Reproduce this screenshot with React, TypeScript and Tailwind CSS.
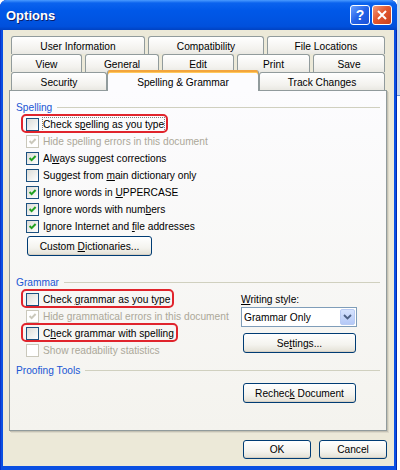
import React from "react";

type BoxProps = { checked?: boolean; disabled?: boolean };

function Box({ checked, disabled }: BoxProps) {
  return (
    <span
      className={
        disabled
          ? "relative flex w-[13px] h-[13px] shrink-0 border border-[#cac8bb] bg-white"
          : "relative flex w-[13px] h-[13px] shrink-0 border border-[#1c5180] bg-[linear-gradient(135deg,#dcdcd7,#ffffff)]"
      }
    >
      {checked && (
        <svg width="11" height="11" viewBox="0 0 11 11" className="absolute left-0 top-0">
          <path
            d="M2.6 5 L4.6 7.1 L8.6 3"
            fill="none"
            stroke={disabled ? "#cac8bb" : "#21a121"}
            strokeWidth="2"
          />
        </svg>
      )}
    </span>
  );
}

type RowProps = {
  children: React.ReactNode;
  checked?: boolean;
  disabled?: boolean;
  red?: boolean;
  focus?: boolean;
};

function Row({ children, checked, disabled, red, focus }: RowProps) {
  return (
    <div className="flex h-[17px] items-center pl-[10px]">
      <div className="relative flex items-center">
        <Box checked={checked} disabled={disabled} />
        <span
          className={
            disabled
              ? "ml-[4px] whitespace-nowrap text-[#aca899]"
              : focus
              ? "ml-[4px] whitespace-nowrap text-black outline-1 outline-dotted outline-[#808080]"
              : "ml-[4px] whitespace-nowrap text-black"
          }
        >
          {children}
        </span>
        {red && (
          <span className="pointer-events-none absolute -left-[5px] -right-[4px] -top-[4px] -bottom-[2px] rounded-[5px] border-2 border-[#e0242c]" />
        )}
      </div>
    </div>
  );
}

function Header({ label, className }: { label: string; className: string }) {
  return (
    <div className={"flex h-[14px] items-center gap-[5px] " + className}>
      <span className="whitespace-nowrap text-[#2056d4]">{label}</span>
      <div className="h-px flex-1 bg-[#d0d0bf]" />
    </div>
  );
}

function XPButton({ children, className }: { children: React.ReactNode; className: string }) {
  return (
    <div
      className={
        "flex items-center justify-center rounded-[3px] border border-[#003c74] bg-[linear-gradient(to_bottom,#ffffff_0%,#f4f3ee_60%,#e3e0d5_100%)] text-black shadow-[inset_0_-1px_0_#d6d0c5] " +
        className
      }
    >
      {children}
    </div>
  );
}

function Tab({ label, w }: { label: string; w: string }) {
  return (
    <div
      className={
        "flex h-[18px] items-center justify-center rounded-t-[3px] border border-b-0 border-[#919b9c] bg-[linear-gradient(to_bottom,#ffffff,#f3f2ee_70%,#e9e8e2)] pt-[1px] text-black " +
        w
      }
    >
      {label}
    </div>
  );
}

export default function App() {
  return (
    <div className="flex h-[470px] w-[400px] overflow-hidden bg-white font-['Liberation_Sans',Arial,sans-serif] text-[10.2px] leading-[13px]">
      <div className="flex h-[470px] w-[397px] shrink-0 flex-col rounded-t-[7px] bg-[#0a4fe2] shadow-[inset_1px_0_0_#0a33c8,inset_-1px_0_0_#002ab0]">
        {/* Title bar */}
        <div className="flex h-[30px] shrink-0 items-center rounded-t-[7px] bg-[linear-gradient(to_bottom,#4a9bff_0%,#0b63ee_10%,#0058e8_35%,#0054e2_65%,#0050dc_88%,#0042c2_100%)] pl-[6px] pr-[5px]">
          <span className="text-[13px] font-bold text-white [text-shadow:1px_1px_0_#0a1e6a]">
            Options
          </span>
          <div className="ml-auto flex gap-[2px]">
            <div className="flex h-[20px] w-[20px] items-center justify-center rounded-[3px] border border-white bg-[linear-gradient(135deg,#6aa0ff,#2463e8_50%,#1a4fd8)] text-[14px] font-bold text-white">
              ?
            </div>
            <div className="flex h-[20px] w-[20px] items-center justify-center rounded-[3px] border border-white bg-[linear-gradient(135deg,#f29a7c,#e3582f_45%,#c8401c)]">
              <svg width="12" height="12" viewBox="0 0 12 12">
                <path d="M2 2 L10 10 M10 2 L2 10" stroke="#ffffff" strokeWidth="2" />
              </svg>
            </div>
          </div>
        </div>

        {/* Body */}
        <div className="mx-[3px] mb-[4px] flex flex-1 flex-col bg-[#ece9d8]">
          {/* Tabs */}
          <div className="ml-[8px] mt-[6px] flex w-[374px] flex-col">
            <div className="flex gap-[3px]">
              <Tab label="User Information" w="w-[134px]" />
              <Tab label="Compatibility" w="w-[116px]" />
              <Tab label="File Locations" w="w-[118px]" />
            </div>
            <div className="flex gap-[3px]">
              <Tab label="View" w="w-[71px]" />
              <Tab label="General" w="w-[74px]" />
              <Tab label="Edit" w="w-[72px]" />
              <Tab label="Print" w="w-[73px]" />
              <Tab label="Save" w="w-[72px]" />
            </div>
            <div className="flex h-[18px]">
              <Tab label="Security" w="w-[96px]" />
              <div className="relative z-10 -mt-[2px] flex h-[21px] w-[152px] items-start justify-center rounded-t-[3px] border-x border-[#919b9c] bg-[#fcfcfe] pt-[6px] shadow-[inset_0_2px_0_#f3a53c,inset_0_3px_0_#ffc85a]">
                Spelling &amp; Grammar
              </div>
              <Tab label="Track Changes" w="w-[126px]" />
            </div>
          </div>

          {/* Panel */}
          <div className="ml-[6px] flex h-[341px] w-[378px] flex-col border border-[#919b9c] bg-[linear-gradient(to_bottom,#fcfcfe,#f4f3ee)] px-[6px] pt-[9px] shadow-[1px_1px_0_#c4c1b3,2px_2px_0_#dcd9ca]">
            <Header label="Spelling" className="" />
            <div className="mt-[2px] flex flex-col">
              <Row red focus>
                Check s<u>p</u>elling as you type
              </Row>
              <Row checked disabled>
                Hide spelling errors in this document
              </Row>
              <Row checked>
                Al<u>w</u>ays suggest corrections
              </Row>
              <Row>
                Suggest from <u>m</u>ain dictionary only
              </Row>
              <Row checked>
                Ignore words in <u>U</u>PPERCASE
              </Row>
              <Row checked>
                Ignore words with num<u>b</u>ers
              </Row>
              <Row checked>
                Ignore Internet and <u>f</u>ile addresses
              </Row>
            </div>
            <XPButton className="ml-[11px] mt-[1px] h-[20px] w-[125px]">
              <span>
                Custom <u>D</u>ictionaries...
              </span>
            </XPButton>

            <Header label="Grammar" className="mt-[19px]" />
            <div className="mt-[2px] flex">
              <div className="flex w-[225px] flex-col">
                <Row red>
                  Check <u>g</u>rammar as you type
                </Row>
                <Row checked disabled>
                  Hide grammatical errors in this document
                </Row>
                <Row red>
                  C<u>h</u>eck grammar with spelling
                </Row>
                <Row disabled>Show readability statistics</Row>
              </div>
              <div className="flex w-[116px] flex-col">
                <div className="flex h-[16px] items-center">
                  <span>
                    <u>W</u>riting style:
                  </span>
                </div>
                <div className="flex h-[20px] items-center border border-[#7f9db9] bg-white pl-[2px] pr-px">
                  <span>Grammar Only</span>
                  <div className="ml-auto flex h-[16px] w-[15px] items-center justify-center rounded-[2px] border border-[#b9cbf3] bg-[linear-gradient(to_bottom,#d6e3fe,#b5c9f7)]">
                    <svg width="9" height="6" viewBox="0 0 9 6">
                      <path d="M1 1 L4.5 4.5 L8 1" fill="none" stroke="#4d6185" strokeWidth="1.8" />
                    </svg>
                  </div>
                </div>
                <XPButton className="ml-[2px] mt-[6px] h-[20px] w-[113px]">
                  <span>
                    Se<u>t</u>tings...
                  </span>
                </XPButton>
              </div>
            </div>

            <Header label="Proofing Tools" className="mt-[4px]" />
            <XPButton className="ml-[227px] mt-[6px] h-[20px] w-[113px]">
              <span>
                Rechec<u>k</u> Document
              </span>
            </XPButton>
          </div>

          {/* Footer */}
          <div className="mt-[9px] flex justify-end gap-[8px] pr-[7px]">
            <XPButton className="h-[19px] w-[68px]">OK</XPButton>
            <XPButton className="h-[19px] w-[68px]">Cancel</XPButton>
          </div>
        </div>
      </div>
      <div className="flex flex-1 flex-col">
        <div className="h-[95px] bg-[#c9d7ee]" />
        <div className="h-px bg-[#6f8fd0]" />
        <div className="flex-1 bg-white" />
      </div>
    </div>
  );
}
